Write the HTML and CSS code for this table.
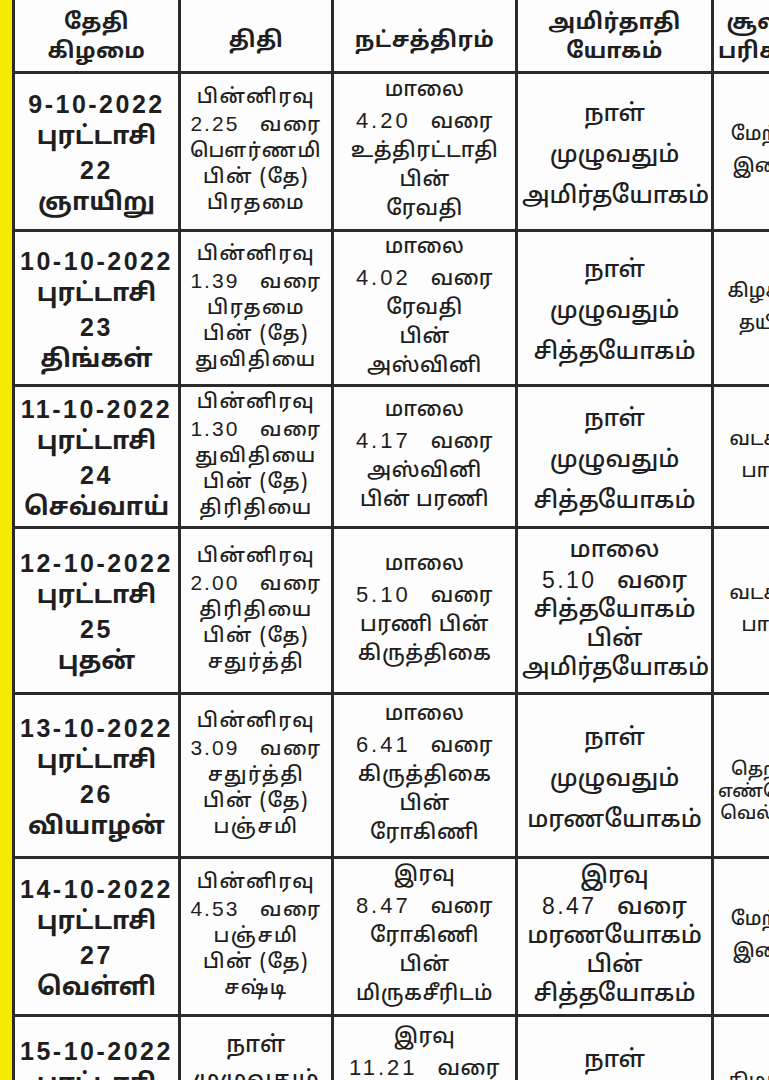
FILE: index.html
```html
<!DOCTYPE html>
<html lang="ta">
<head>
<meta charset="utf-8">
<title>நாள்காட்டி</title>
<link rel="stylesheet" href="styles.css">
</head>
<body>
<div class="page">
  <table class="cal">
    <colgroup>
      <col class="c1"><col class="c2"><col class="c3"><col class="c4"><col class="c5">
    </colgroup>
    <thead>
      <tr class="hd">
        <th><span class="l">தேதி</span><span class="l">கிழமை</span></th>
        <th class="one"><span class="l">திதி</span></th>
        <th class="one"><span class="l">நட்சத்திரம்</span></th>
        <th><span class="l">அமிர்தாதி</span><span class="l">யோகம்</span></th>
        <th><span class="l">சூலம்</span><span class="l">பரிகாரம்</span></th>
      </tr>
    </thead>
    <tbody>
      <tr class="r1">
        <td class="date"><span class="l n">9-10-2022</span><span class="l">புரட்டாசி</span><span class="l n">22</span><span class="l">ஞாயிறு</span></td>
        <td class="thi"><span class="l">பின்னிரவு</span><span class="l j"><span class="n">2.25</span> வரை</span><span class="l">பௌர்ணமி</span><span class="l">பின் (தே)</span><span class="l">பிரதமை</span></td>
        <td class="nak"><span class="l">மாலை</span><span class="l j"><span class="n">4.20</span> வரை</span><span class="l">உத்திரட்டாதி</span><span class="l">பின்</span><span class="l">ரேவதி</span></td>
        <td class="yog big"><span class="l">நாள்</span><span class="l">முழுவதும்</span><span class="l">அமிர்தயோகம்</span></td>
        <td class="sul"><span class="l">மேற்கு</span><span class="l">இலை</span></td>
      </tr>
      <tr class="r2">
        <td class="date"><span class="l n">10-10-2022</span><span class="l">புரட்டாசி</span><span class="l n">23</span><span class="l">திங்கள்</span></td>
        <td class="thi"><span class="l">பின்னிரவு</span><span class="l j"><span class="n">1.39</span> வரை</span><span class="l">பிரதமை</span><span class="l">பின் (தே)</span><span class="l">துவிதியை</span></td>
        <td class="nak"><span class="l">மாலை</span><span class="l j"><span class="n">4.02</span> வரை</span><span class="l">ரேவதி</span><span class="l">பின்</span><span class="l">அஸ்வினி</span></td>
        <td class="yog big"><span class="l">நாள்</span><span class="l">முழுவதும்</span><span class="l">சித்தயோகம்</span></td>
        <td class="sul"><span class="l">கிழக்கு</span><span class="l">தயிர்</span></td>
      </tr>
      <tr class="r3">
        <td class="date"><span class="l n">11-10-2022</span><span class="l">புரட்டாசி</span><span class="l n">24</span><span class="l">செவ்வாய்</span></td>
        <td class="thi"><span class="l">பின்னிரவு</span><span class="l j"><span class="n">1.30</span> வரை</span><span class="l">துவிதியை</span><span class="l">பின் (தே)</span><span class="l">திரிதியை</span></td>
        <td class="nak"><span class="l">மாலை</span><span class="l j"><span class="n">4.17</span> வரை</span><span class="l">அஸ்வினி</span><span class="l">பின் பரணி</span></td>
        <td class="yog big"><span class="l">நாள்</span><span class="l">முழுவதும்</span><span class="l">சித்தயோகம்</span></td>
        <td class="sul"><span class="l">வடக்கு</span><span class="l">பால்</span></td>
      </tr>
      <tr class="r4">
        <td class="date"><span class="l n">12-10-2022</span><span class="l">புரட்டாசி</span><span class="l n">25</span><span class="l">புதன்</span></td>
        <td class="thi"><span class="l">பின்னிரவு</span><span class="l j"><span class="n">2.00</span> வரை</span><span class="l">திரிதியை</span><span class="l">பின் (தே)</span><span class="l">சதுர்த்தி</span></td>
        <td class="nak"><span class="l">மாலை</span><span class="l j"><span class="n">5.10</span> வரை</span><span class="l">பரணி பின்</span><span class="l">கிருத்திகை</span></td>
        <td class="yog"><span class="l">மாலை</span><span class="l j"><span class="n">5.10</span> வரை</span><span class="l">சித்தயோகம்</span><span class="l">பின்</span><span class="l">அமிர்தயோகம்</span></td>
        <td class="sul"><span class="l">வடக்கு</span><span class="l">பால்</span></td>
      </tr>
      <tr class="r5">
        <td class="date"><span class="l n">13-10-2022</span><span class="l">புரட்டாசி</span><span class="l n">26</span><span class="l">வியாழன்</span></td>
        <td class="thi"><span class="l">பின்னிரவு</span><span class="l j"><span class="n">3.09</span> வரை</span><span class="l">சதுர்த்தி</span><span class="l">பின் (தே)</span><span class="l">பஞ்சமி</span></td>
        <td class="nak"><span class="l">மாலை</span><span class="l j"><span class="n">6.41</span> வரை</span><span class="l">கிருத்திகை</span><span class="l">பின்</span><span class="l">ரோகிணி</span></td>
        <td class="yog big"><span class="l">நாள்</span><span class="l">முழுவதும்</span><span class="l">மரணயோகம்</span></td>
        <td class="sul tight"><span class="l">தெற்கு</span><span class="l">எண்ணெய்</span><span class="l">வெல்லம்</span></td>
      </tr>
      <tr class="r6">
        <td class="date"><span class="l n">14-10-2022</span><span class="l">புரட்டாசி</span><span class="l n">27</span><span class="l">வெள்ளி</span></td>
        <td class="thi"><span class="l">பின்னிரவு</span><span class="l j"><span class="n">4.53</span> வரை</span><span class="l">பஞ்சமி</span><span class="l">பின் (தே)</span><span class="l">சஷ்டி</span></td>
        <td class="nak"><span class="l">இரவு</span><span class="l j"><span class="n">8.47</span> வரை</span><span class="l">ரோகிணி</span><span class="l">பின்</span><span class="l">மிருகசீரிடம்</span></td>
        <td class="yog"><span class="l">இரவு</span><span class="l j"><span class="n">8.47</span> வரை</span><span class="l">மரணயோகம்</span><span class="l">பின்</span><span class="l">சித்தயோகம்</span></td>
        <td class="sul"><span class="l">மேற்கு</span><span class="l">இலை</span></td>
      </tr>
      <tr class="r7">
        <td class="date"><span class="l n">15-10-2022</span><span class="l">புரட்டாசி</span><span class="l n">28</span><span class="l">சனி</span></td>
        <td class="thi big top"><span class="l">நாள்</span><span class="l">முழுவதும்</span><span class="l">சஷ்டி</span></td>
        <td class="nak"><span class="l">இரவு</span><span class="l j"><span class="n">11.21</span> வரை</span><span class="l">மிருகசீரிடம்</span><span class="l">பின்</span><span class="l">திருவாதிரை</span></td>
        <td class="yog big"><span class="l">நாள்</span><span class="l">முழுவதும்</span><span class="l">சித்தயோகம்</span></td>
        <td class="sul"><span class="l">கிழக்கு</span><span class="l">தயிர்</span></td>
      </tr>
    </tbody>
  </table>
</div>
</body>
</html>
```
FILE: styles.css
```css
html, body {
  margin: 0;
  padding: 0;
  overflow: hidden;
  background: #f7ea00;
}
.page {
  width: 900px;
  height: 1080px;
  padding-left: 12px;
  overflow: hidden;
  background: #f7ea00;
}
.cal {
  border-collapse: collapse;
  table-layout: fixed;
  width: 804px;
  background: #fdfdfd;
  color: #1f1f1f;
  font-family: "Noto Sans Tamil", "Lohit Tamil", "Liberation Sans", sans-serif;
  font-size: 20px;
  line-height: 26px;
}
.c1 { width: 166px; }
.c2 { width: 153px; }
.c3 { width: 184px; }
.c4 { width: 196px; }
.c5 { width: 105px; }
.cal th, .cal td {
  border: 3px solid #2b2b2b;
  padding: 0 4px;
  text-align: center;
  vertical-align: middle;
}
.cal thead th {
  border-top: 0;
  padding-top: 5px;
  font-weight: 700;
  font-size: 22px;
  line-height: 29px;
  letter-spacing: 0.5px;
}
.cal thead th.one { padding-top: 12px; }
.hd { height: 72px; }
.r1 { height: 158px; }
.r2 { height: 155px; }
.r3 { height: 142px; }
.r4 { height: 166px; }
.r5 { height: 164px; }
.r6 { height: 158px; }
.r7 { height: 165px; }
.l { display: block; white-space: nowrap; }
.n { font-family: "Liberation Sans", sans-serif; letter-spacing: 1.5px; }
.j { word-spacing: 14px; }
.cal td.date {
  padding-top: 6px;
  font-weight: 700;
  font-size: 25px;
  line-height: 33px;
}
.date .n { letter-spacing: 2.5px; }
.thi { font-size: 20px; line-height: 26px; letter-spacing: 1.5px; font-weight: 500; }
.thi .n { font-size: 21px; letter-spacing: 2px; }
.nak { font-size: 21px; line-height: 29px; letter-spacing: 0.5px; font-weight: 500; }
.nak .n { font-size: 22px; letter-spacing: 3px; }
.yog { font-size: 24px; line-height: 29px; letter-spacing: 0; font-weight: 500; }
.yog .n { font-size: 23px; letter-spacing: 2.5px; }
.cal td.big { line-height: 41px; padding-top: 10px; }
.cal td.thi.big { font-size: 23px; line-height: 35px; letter-spacing: 0.5px; }
.cal td.top { vertical-align: top; padding-top: 12px; }
.sul { font-size: 19px; line-height: 32px; font-weight: 500; text-align: center; }
.cal td.sul.tight { font-size: 18px; line-height: 22px; padding-top: 36px; }
```
